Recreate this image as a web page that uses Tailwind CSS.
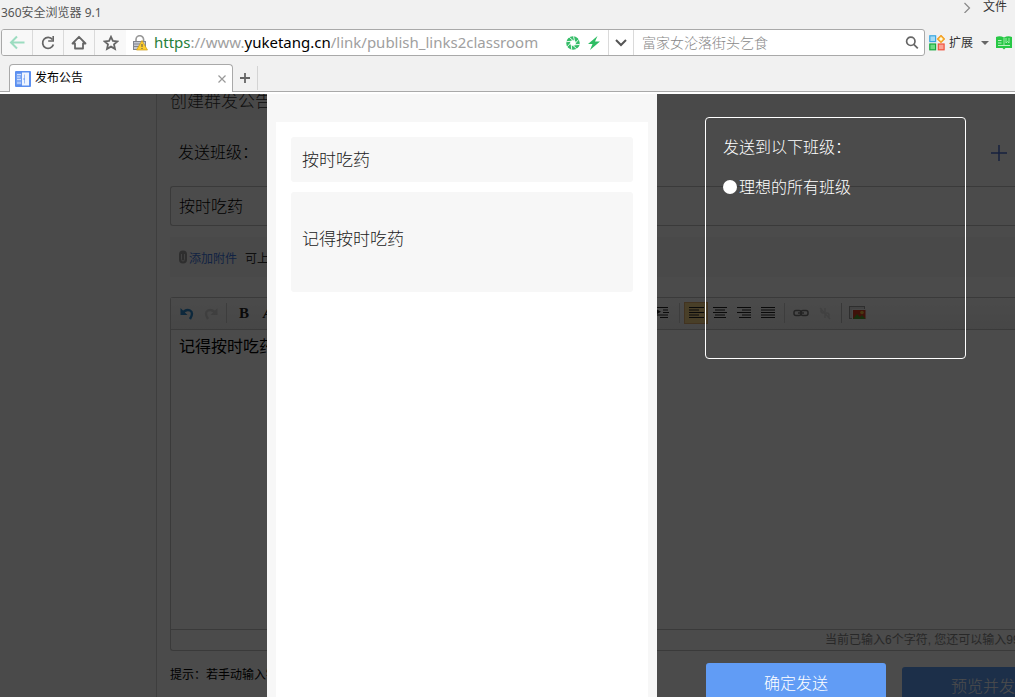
<!DOCTYPE html>
<html lang="zh-CN">
<head>
<meta charset="utf-8">
<meta name="viewport" content="width=device-width, initial-scale=1">
<title>发布公告</title>
<script src="https://cdn.jsdelivr.net/npm/@tailwindcss/browser@4"></script>
</head>
<body class="flex h-screen flex-col overflow-hidden bg-[#f1f1f1] font-['Liberation_Sans','Noto_Sans_CJK_SC',sans-serif] text-xs text-[#333]">

<!-- Browser window chrome -->
<header class="shrink-0 font-['Noto_Sans','Noto_Sans_CJK_SC',sans-serif]">
  <div class="flex h-[29px] items-start justify-between pl-px pr-2">
    <span class="pt-[5px] leading-4 text-[#555]">360安全浏览器 9.1</span>
    <div class="flex items-center gap-3">
      <button aria-label="更多" class="block"><svg class="h-3 w-2" viewBox="0 0 8 12" fill="none" stroke="#888" stroke-width="1.2"><path d="M1.5 2 6.5 7l-5 5"/></svg></button>
      <button class="leading-[14px]">文件</button>
    </div>
  </div>

  <div class="flex h-[27px] items-center pl-px">
    <div class="flex h-full min-w-0 flex-1 overflow-hidden rounded-[3px] border border-[#a9a9a9] bg-white">
      <nav class="flex divide-x divide-[#dadada] bg-[#f8f8f8]">
        <button aria-label="后退" class="grid w-[31px] place-items-center"><svg class="size-4" viewBox="0 0 16 16" fill="none" stroke="#9cdcc0" stroke-width="2"><path d="M15.500 7.500H2M8 1.500 2 7.500l6 6"/></svg></button>
        <button aria-label="刷新" class="grid w-[31px] place-items-center"><svg class="size-4" viewBox="0 0 16 16" fill="none" stroke="#666" stroke-width="1.800"><path d="M12.500 4.500A5.500 5.500 0 1 0 13.400 9.500"/><path d="M13.200 1v5H8.200" stroke-width="1.600"/></svg></button>
        <button aria-label="主页" class="grid w-[31px] place-items-center"><svg class="size-4" viewBox="0 0 16 16" fill="none" stroke="#666" stroke-width="1.800" stroke-linejoin="round"><path d="M8 1.800 1.500 8.500H4V13.500h8V8.500h2.500z"/></svg></button>
        <button aria-label="收藏" class="grid w-[31px] place-items-center"><svg class="size-4" viewBox="0 0 16 16" fill="none" stroke="#666" stroke-width="1.800"><path d="m8 1.800 1.900 4.100 4.500.5-3.400 3 1 4.500L8 11.600l-4 2.300 1-4.500-3.400-3 4.500-.5z"/></svg></button>
      </nav>
      <div class="flex min-w-0 flex-1 items-center pl-[6px] pr-[7px]">
        <svg class="size-4 shrink-0" viewBox="0 0 16 16"><path d="M4 7V4.500a3.800 3.800 0 0 1 7.600 0V7" fill="none" stroke="#999" stroke-width="1.600"/><rect x="1.500" y="6.500" width="12" height="8" fill="#c6c9d2" stroke="#81858f"/><path d="M2 9h6M2 11.500h5" stroke="#81858f"/><path d="M10 5.500 15.500 15h-11z" fill="#ffce2e" stroke="#c99a18" stroke-width=".7"/><path d="M10 9v3M10 13v1" stroke="#555"/></svg>
        <div role="textbox" aria-label="地址栏" contenteditable="true" spellcheck="false" class="ml-[6px] min-w-0 flex-1 overflow-hidden whitespace-nowrap pb-[2px] text-[15px] leading-6 text-[#a0a0a0]"><span class="text-[#27803a]">https</span>://www.<span class="text-black">yuketang.cn</span>/link/publish_links2classroom</div>
        <button aria-label="兼容模式" class="ml-2"><svg class="size-[14px]" viewBox="0 0 14 14" fill="none"><circle cx="7" cy="7" r="4.800" stroke="#35bd68" stroke-width="4"/><path d="M8.800 6.200 7.500.3M8.800 7.800l4-4.500M7.700 8.900l6-.5M6.200 8.800l4.500 4M5.200 7.700l.5 6M5.200 6.300l-4 4.500M6.300 5.200l-6 .5M7.700 5.200l-4.500-4" stroke="#fff" stroke-width=".9"/></svg></button>
        <button aria-label="极速模式" class="ml-[7px]"><svg class="size-[14px]" viewBox="0 0 14 14" fill="#2fbd64"><path d="M10.500 0 1 8h4.500L3 14l10-8.500H8z"/></svg></button>
      </div>
      <button aria-label="展开地址" class="grid w-[26px] place-items-center border-x border-[#dadada]"><svg class="h-2 w-3" viewBox="0 0 12 8" fill="none" stroke="#555" stroke-width="2"><path d="m1 1 5 5 5-5"/></svg></button>
      <div class="flex w-[290px] items-center pl-2 pr-[5px]">
        <input type="text" aria-label="搜索" placeholder="富家女沦落街头乞食" class="min-w-0 flex-1 text-[14px] font-light leading-6 outline-none placeholder:text-[#888]">
        <button aria-label="搜索"><svg class="size-[14px]" viewBox="0 0 14 14" fill="none" stroke="#666" stroke-width="1.700"><circle cx="5.800" cy="5.300" r="4.200"/><path d="m8.800 8.300 4 4"/></svg></button>
      </div>
    </div>
    <div class="flex shrink-0 items-center pl-1 pr-[3px]">
      <button class="flex items-center gap-1 leading-4"><svg class="size-4" viewBox="0 0 16 16" stroke-width="1.200"><rect x=".8" y=".8" width="5.800" height="5.800" fill="#a5dbf5" stroke="#38a5df"/><path d="M12 .5 15.500 4 12 7.500 8.500 4z" fill="#ffd45c" stroke="#f39a1c"/><path d="M12 2.500v3M10.500 4h3" stroke="#fff"/><rect x=".8" y="9" width="5.800" height="5.800" fill="#6edb83" stroke="#14a83c"/><rect x="9.300" y="9" width="5.800" height="5.800" fill="#fba294" stroke="#f1523d"/></svg>扩展</button>
      <button aria-label="扩展菜单" class="ml-2"><svg class="h-1 w-2" viewBox="0 0 8 4"><path d="M0 0h8L4 4z" fill="#666"/></svg></button>
      <button aria-label="阅读" class="ml-[7px]"><svg class="h-[14px] w-4" viewBox="0 0 16 14"><path d="M0 1q4-1.500 8 .5Q12-.5 16 1v11H9.500L8 13.500 6.500 12H0z" fill="#27c845"/><path d="M2 4.500h3.500M2 7h3.500M2 9.500h12" stroke="#b8f2c0"/><path d="M8 2v8M10 2v5l1.500-1.500L13 7V2" fill="none" stroke="#b8f2c0" stroke-width=".8"/></svg></button>
    </div>
  </div>

  <div class="flex h-9 items-end border-b border-[#a9a9a9] pl-[9px]">
    <div class="-mb-px flex h-[28px] w-[224px] items-center rounded-t-[4px] border border-b-0 border-[#a9a9a9] bg-white pl-[5px] pr-[6px]">
      <svg class="size-4" viewBox="0 0 16 16"><rect width="16" height="16" rx="1" fill="#5b8ff0"/><path d="M1.500 2.500h5v11h-5z" fill="#85acf5"/><path d="M2 3.500h4M2 6h3M2 8.500h4M2 12h4" stroke="#cfe0ff"/><path d="M7 1.500h7v13H7z" fill="#eef4ff"/><path d="M9.500 3.500v9" stroke="#9cbcf8"/><path d="M8.500 8h1" stroke="#5b8ff0" stroke-width="1.500"/></svg>
      <button class="ml-1 flex-1 pb-px text-left leading-4 text-black">发布公告</button>
      <button aria-label="关闭标签页"><svg class="size-2" viewBox="0 0 8 8" stroke="#999" stroke-width="1.200"><path d="m.5.5 7 7M7.500.5l-7 7"/></svg></button>
    </div>
    <button aria-label="新建标签页" class="mb-px grid h-6 w-[25px] place-items-center border-r border-[#d4d4d4]"><svg class="size-[10px]" viewBox="0 0 10 10" stroke="#666" stroke-width="1.800"><path d="M5 0v10M0 5h10"/></svg></button>
  </div>
  <div class="h-[2px] bg-white"></div>
</header>

<div class="relative min-h-0 flex-1 overflow-hidden bg-[#f7f7f7]">

  <!-- Announcement form -->
  <main class="ml-[156px] h-full border-l border-[#cfcfcf] bg-[#fafafa] text-black">
    <h1 class="h-[26px] whitespace-nowrap bg-[#f3f3f3] pl-[13px] text-[17px] font-light leading-4 text-[#333]">创建群发公告</h1>
    <div class="flex h-[66px] items-center justify-between pl-[21px] pr-[8px]">
      <span class="text-[16px] font-light leading-6">发送班级：</span>
      <button aria-label="添加班级"><svg class="size-4" viewBox="0 0 16 16" stroke="#4a6fd0" stroke-width="1.500"><path d="M8 0v16M0 8h16"/></svg></button>
    </div>
    <div class="pl-[13px]">
      <input type="text" aria-label="公告标题" value="按时吃药" class="block h-10 w-full rounded-l-[3px] border border-r-0 border-[#c4c4c4] px-2 pb-[2px] text-[16px] font-light">
      <div class="mt-[11px] flex h-10 items-center bg-[#f3f3f3] pl-2 pt-1 font-light leading-4">
        <svg class="mb-1 h-[14px] w-[11px]" viewBox="0 0 11 14"><rect x="1" y=".5" width="8" height="13" rx="4" fill="#999"/><path d="M3.500 4v5.500a1.500 1.500 0 0 0 3 0V4" fill="none" stroke="#ddd"/></svg>
        <a href="#" class="font-normal text-[#3f76e0]">添加附件</a><span class="ml-2 font-normal text-[#333]">可上传附件</span>
      </div>
      <div class="mt-5 rounded-l-[3px] border border-r-0 border-[#c4c4c4]">
        <div class="flex h-8 items-center border-b border-[#c4c4c4] bg-linear-to-b from-[#fafafa] to-[#ececec] pb-[2px] pl-1">
          <button aria-label="撤销" class="grid h-5 w-6 place-items-center"><svg class="size-[14px]" viewBox="0 0 14 14" fill="none" stroke="#2c86c8" stroke-width="2.400"><path d="M2 7.500q4-5 8-3t0 8.500"/><path d="M.5 2v7h7z" fill="#2c86c8" stroke="none"/></svg></button>
          <button aria-label="重做" class="grid h-5 w-6 place-items-center opacity-30"><svg class="size-[14px]" viewBox="0 0 14 14" fill="none" stroke="#888" stroke-width="2.400"><path d="M12 7.500q-4-5-8-3t0 8.500"/><path d="M13.500 2v7h-7z" fill="#888" stroke="none"/></svg></button>
          <span class="ml-[3px] mr-[5px] h-5 w-px bg-[#ccc]"></span>
          <button aria-label="粗体" class="h-5 w-6 font-['Liberation_Serif',serif] text-[15px] font-bold leading-5 text-[#222]">B</button>
          <button aria-label="字体颜色" class="h-5 w-6 font-['Liberation_Serif',serif] text-[15px] font-bold italic leading-5 text-[#222]">A</button>
          <span class="w-[371px] shrink-0"></span>
          <button aria-label="缩进" class="grid h-5 w-6 place-items-center"><svg class="h-[11px] w-[14px]" viewBox="0 0 14 11" stroke="#222"><path d="M0 .5h12M7 3h5M7 5.500h6M0 8h12M4 10.500h8"/><path d="m1 2.500 4 2.300-4 2.200z" fill="#222" stroke="none"/></svg></button>
          <span class="mx-1 h-5 w-px bg-[#ccc]"></span>
          <button aria-label="左对齐" class="grid h-[22px] w-6 place-items-center border border-[#dcac6c] bg-[#f4d488]"><svg class="h-[11px] w-[15px]" viewBox="0 0 15 11" stroke="#222"><path d="M0 .5h15M0 3h10M0 5.500h15M0 8h10M0 10.500h15"/></svg></button>
          <button aria-label="居中" class="grid h-5 w-6 place-items-center"><svg class="h-[11px] w-[14px]" viewBox="0 0 14 11" stroke="#222"><path d="M0 .5h14M2 3h10M0 5.500h14M2 8h10M1 10.500h12"/></svg></button>
          <button aria-label="右对齐" class="grid h-5 w-6 place-items-center"><svg class="h-[11px] w-[14px]" viewBox="0 0 14 11" stroke="#222"><path d="M0 .5h14M5 3h9M0 5.500h14M5 8h9M2 10.500h12"/></svg></button>
          <button aria-label="两端对齐" class="grid h-5 w-6 place-items-center"><svg class="h-[11px] w-[14px]" viewBox="0 0 14 11" stroke="#222"><path d="M0 .5h14M0 3h14M0 5.500h14M0 8h14M0 10.500h14"/></svg></button>
          <span class="mx-1 h-5 w-px bg-[#ccc]"></span>
          <button aria-label="插入链接" class="grid h-5 w-6 place-items-center"><svg class="h-2 w-4" viewBox="0 0 16 8" fill="none" stroke="#777" stroke-width="1.500"><rect x="1" y="1.500" width="7" height="5" rx="2"/><rect x="8" y="1.500" width="7" height="5" rx="2"/><path d="M5 4h6"/></svg></button>
          <button aria-label="取消链接" class="grid h-5 w-6 place-items-center opacity-20"><svg class="size-[14px]" viewBox="0 0 14 14" fill="none" stroke="#777" stroke-width="1.500"><path d="M3 2v3a2 2 0 0 0 4 0V2M7 12V9a2 2 0 0 1 4 0v3M2 2l10 11"/></svg></button>
          <span class="mx-1 h-5 w-px bg-[#bbb]"></span>
          <button aria-label="插入图片" class="grid h-5 w-6 place-items-center"><svg class="size-[18px]" viewBox="0 0 18 18"><rect x=".5" y="2.500" width="15" height="12" fill="#ddd" stroke="#999"/><rect x="3.500" y="5.500" width="13.500" height="10" fill="#d23c24" stroke="#eee"/><path d="m4 15 4-5 3 3 2-2 3.500 4z" fill="#4f9c2c"/><circle cx="13" cy="8.500" r="1.800" fill="#f4b93a"/></svg></button>
        </div>
        <textarea aria-label="公告内容" class="block h-[299px] w-full resize-none bg-transparent px-2 py-[5px] text-[16px] font-normal leading-6 outline-none">记得按时吃药</textarea>
        <div class="flex h-[21px] items-center justify-end border-t border-[#c4c4c4]">
          <span class="w-[190px] overflow-hidden whitespace-nowrap leading-4 text-[#888]">当前已输入6个字符, 您还可以输入9994个字符。</span>
        </div>
      </div>
      <div class="flex items-start justify-between">
        <p class="pt-4 leading-4">提示：若手动输入链接</p>
        <button class="mt-4 h-10 w-[113px] overflow-hidden whitespace-nowrap rounded-tl-[3px] bg-[#5e9df5] pl-[49px] text-left text-[16px] font-light text-white">预览并发布</button>
      </div>
    </div>
  </main>

  <!-- Send confirmation, laid over the form -->
  <section role="dialog" aria-label="预览公告" class="absolute inset-0 flex gap-12 bg-black/70 pl-[267px]">
    <div class="flex w-[390px] shrink-0 flex-col bg-[#f7f7f7] px-[9px] pt-7 text-[17px] font-light text-[#222]">
      <div class="flex flex-1 flex-col gap-[10px] bg-white px-[15px] pt-[15px]">
        <h2 class="rounded-[3px] bg-[#f7f7f7] px-[11px] pb-[9px] pt-3 font-light leading-6">按时吃药</h2>
        <p class="rounded-[3px] bg-[#f7f7f7] px-[11px] pb-10 pt-9 leading-6">记得按时吃药</p>
      </div>
    </div>
    <div class="w-[261px] pt-[23px] text-[16px] font-light text-white">
      <fieldset class="h-[242px] rounded-[4px] border border-white px-[17px] pt-[18px]">
        <p class="leading-6">发送到以下班级：</p>
        <label class="mt-4 flex items-center gap-[2px] leading-6"><input type="radio" name="class" class="mb-[2px] size-[14px] appearance-none rounded-full bg-white">理想的所有班级</label>
      </fieldset>
      <button class="ml-px mt-[304px] block h-10 w-[180px] rounded-[3px] bg-[#619cf5] pt-[2px]">确定发送</button>
    </div>
  </section>
</div>
</body>
</html>
